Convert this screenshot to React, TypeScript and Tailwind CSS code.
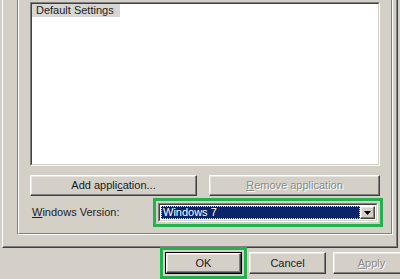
import React from "react";

// --- classic win32 bevels ---
const raised =
  "border border-t-white border-l-white border-r-[#404040] border-b-[#404040] shadow-[inset_-1px_-1px_0_#808080,inset_1px_1px_0_#e8e6e0] bg-[#d4d0c8]";
const sunken =
  "border border-t-[#808080] border-l-[#808080] border-r-white border-b-white";

const Btn = ({ children, className = "", disabled = false }: { children: React.ReactNode; className?: string; disabled?: boolean }) => (
  <div
    className={`${raised} flex items-center justify-center ${disabled ? "text-[#8c8a84] [text-shadow:1px_1px_0_#ffffff]" : "text-[#1a1a1a]"} ${className}`}
  >
    {children}
  </div>
);

export default function App() {
  return (
    <div className="w-[400px] h-[279px] overflow-hidden bg-[#d4d0c8] text-[11px] leading-none text-black font-['Liberation_Sans',Arial,sans-serif]">
      {/* tab page */}
      <div className="ml-[2px] w-[396px] h-[248px] border-l border-l-white border-r border-r-[#404040] border-b border-b-[#404040] shadow-[inset_-1px_-1px_0_#808080] pl-[14px]">
        {/* group box (etched) */}
        <div className="w-[376px] h-[235px] border-l border-l-[#808080] border-r border-r-white border-b border-b-white">
          <div className="h-full border-l border-l-white border-r border-r-[#808080] border-b border-b-[#808080] pl-[11px] pt-[2px]">
            {/* app list */}
            <div className={`${sunken} w-[350px] h-[164px] bg-white`}>
              <div className="h-full border border-t-[#404040] border-l-[#404040] border-r-[#d4d0c8] border-b-[#d4d0c8] bg-white">
                <div className="w-[88px] h-[13px] bg-[#d6d6d2] pl-[4px] flex items-center whitespace-nowrap text-[#222]">
                  Default Settings
                </div>
              </div>
            </div>

            {/* add / remove */}
            <div className="mt-[9px] flex gap-[12px]">
              <Btn className="w-[167px] h-[21px]">
                <span>
                  Add appli<span className="underline">c</span>ation...
                </span>
              </Btn>
              <Btn className="w-[171px] h-[21px]" disabled>
                <span>
                  <span className="underline">R</span>emove application
                </span>
              </Btn>
            </div>

            {/* version */}
            <div className="mt-[7px] flex items-center">
              <div className="w-[128px] pl-[2px] text-[#222]">
                <span className="underline">W</span>indows Version:
              </div>
              <div className="w-[220px] h-[19px] bg-white outline-[3px] outline-[#22b14c] outline-offset-[2px] flex">
                <div className={`${sunken} flex-1 flex`}>
                  <div className="flex-1 flex border border-t-[#404040] border-l-[#404040] border-r-[#d4d0c8] border-b-[#d4d0c8] p-[1px] bg-white">
                    <div className="flex-1 bg-[#0a246a] text-white border border-dotted border-[#e8e08a] flex items-center pl-[1px]">
                      Windows 7
                    </div>
                    <div className={`${raised} w-[15px] flex items-center justify-center`}>
                      <svg width="7" height="4" viewBox="0 0 7 4">
                        <path d="M0 0h7L3.5 4z" fill="#000" />
                      </svg>
                    </div>
                  </div>
                </div>
              </div>
            </div>
          </div>
        </div>
      </div>

      {/* dialog buttons */}
      <div className="mt-[4px] ml-[165px] flex gap-[7px]">
        <div className="w-[77px] h-[22px] shrink-0 border border-black outline-[3px] outline-[#22b14c] outline-offset-[2px] flex">
          <Btn className="flex-1">OK</Btn>
        </div>
        <Btn className="w-[77px] h-[22px] shrink-0">Cancel</Btn>
        <Btn className="w-[77px] h-[22px] shrink-0" disabled>
          <span>
            <span className="underline">A</span>pply
          </span>
        </Btn>
      </div>
    </div>
  );
}
